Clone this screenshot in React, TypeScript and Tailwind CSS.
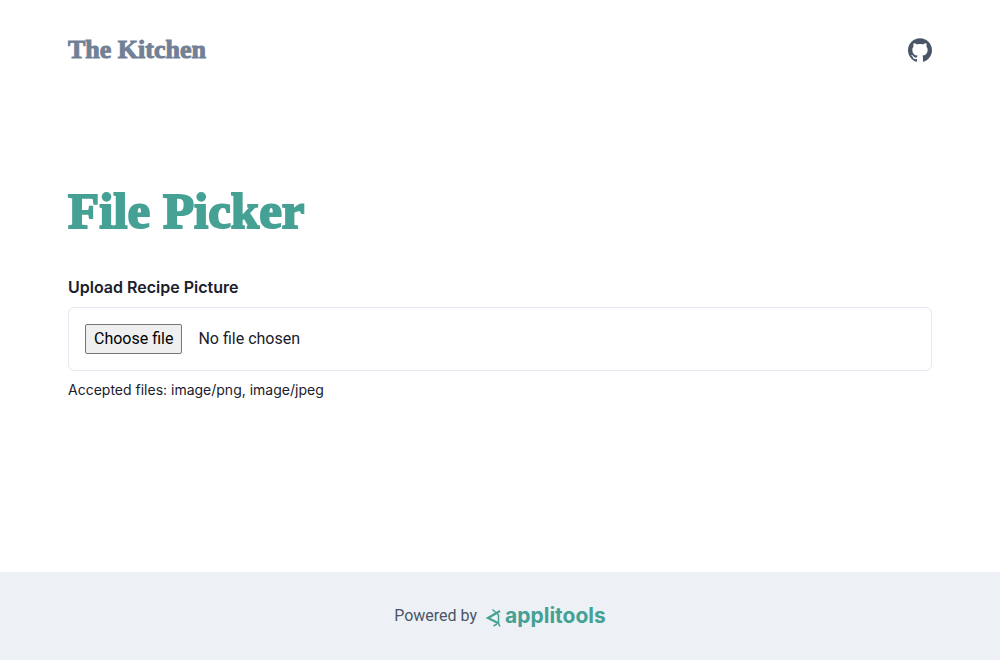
import { useRef, useState } from "react";

function Header() {
  return (
    <header className="flex items-center justify-between px-[68px] py-8">
      <a
        href="/"
        className="font-['Liberation_Serif',serif] text-[26px] leading-9 font-bold text-[#718096] [-webkit-text-stroke:1px_#718096]"
      >
        The Kitchen
      </a>
      <a href="https://github.com" aria-label="GitHub" className="text-[#4a5568]">
        <svg viewBox="0 0 24 24" className="size-6" fill="currentColor" aria-hidden="true">
          <path d="M12 .297c-6.630 0-12 5.373-12 12 0 5.303 3.438 9.800 8.205 11.385.6.113.82-.258.82-.577 0-.285-.010-1.040-.015-2.040-3.338.724-4.042-1.610-4.042-1.610C4.422 18.070 3.633 17.700 3.633 17.700c-1.087-.744.084-.729.084-.729 1.205.084 1.838 1.236 1.838 1.236 1.070 1.835 2.809 1.305 3.495.998.108-.776.417-1.305.76-1.605-2.665-.3-5.466-1.332-5.466-5.930 0-1.310.465-2.380 1.235-3.220-.135-.303-.54-1.523.105-3.176 0 0 1.005-.322 3.300 1.230.96-.267 1.980-.399 3-.405 1.020.006 2.040.138 3 .405 2.280-1.552 3.285-1.230 3.285-1.230.645 1.653.24 2.873.12 3.176.765.840 1.230 1.910 1.230 3.220 0 4.610-2.805 5.625-5.475 5.920.420.360.810 1.096.810 2.220 0 1.606-.015 2.896-.015 3.286 0 .315.210.690.825.570C20.565 22.092 24 17.592 24 12.297c0-6.627-5.373-12-12-12" />
        </svg>
      </a>
    </header>
  );
}

function FilePicker() {
  const input = useRef<HTMLInputElement>(null);
  const [name, setName] = useState("No file chosen");

  return (
    <section>
      <label htmlFor="recipe-picture" className="block font-[Inter,sans-serif] leading-6 font-semibold">
        Upload Recipe Picture
      </label>
      <div className="relative mt-2 flex items-center gap-4 rounded-md border border-[#e2e8f0] p-4">
        <input
          ref={input}
          id="recipe-picture"
          type="file"
          accept="image/png, image/jpeg"
          aria-describedby="accepted-files"
          className="sr-only"
          onChange={(event) => setName(event.target.files?.[0]?.name ?? "No file chosen")}
        />
        <button
          type="button"
          onClick={() => input.current?.click()}
          className="rounded-xs border border-[#767676] bg-[#efefef] px-2 py-0.5 leading-6 text-black"
        >
          Choose file
        </button>
        <span>{name}</span>
      </div>
      <p id="accepted-files" className="mt-2 font-[Inter,sans-serif] text-sm leading-[22px]">
        Accepted files: image/png, image/jpeg
      </p>
    </section>
  );
}

function Footer() {
  return (
    <footer className="flex items-center justify-center gap-2 bg-[#edf1f6] py-8 text-[#4a5568]">
      <span className="leading-6">Powered by</span>
      <a href="https://applitools.com" className="flex items-end gap-1 text-[#46a195]">
        <svg viewBox="0 0 16 20" className="h-5 w-4" fill="none" stroke="currentColor" aria-hidden="true">
          <path d="M15 3 3 10 14 15.500" strokeWidth="2.200" />
          <path d="M7.500 1.500 13.500 7v8.500L15 18.500M12 16 8.500 18" strokeWidth="1.500" />
        </svg>
        <span className="font-[Inter,sans-serif] text-[21px] leading-6 font-bold">applitools</span>
      </a>
    </footer>
  );
}

export default function App() {
  return (
    <div className="flex min-h-screen flex-col bg-white font-[Roboto,sans-serif] text-base text-[#1a202c]">
      <Header />
      <main className="flex-1 px-[68px] pt-20">
        <h1 className="mb-8 font-['Liberation_Serif',serif] text-[51px] leading-[63px] font-bold text-[#46a195] [-webkit-text-stroke:2px_#46a195]">
          File Picker
        </h1>
        <FilePicker />
      </main>
      <Footer />
    </div>
  );
}
